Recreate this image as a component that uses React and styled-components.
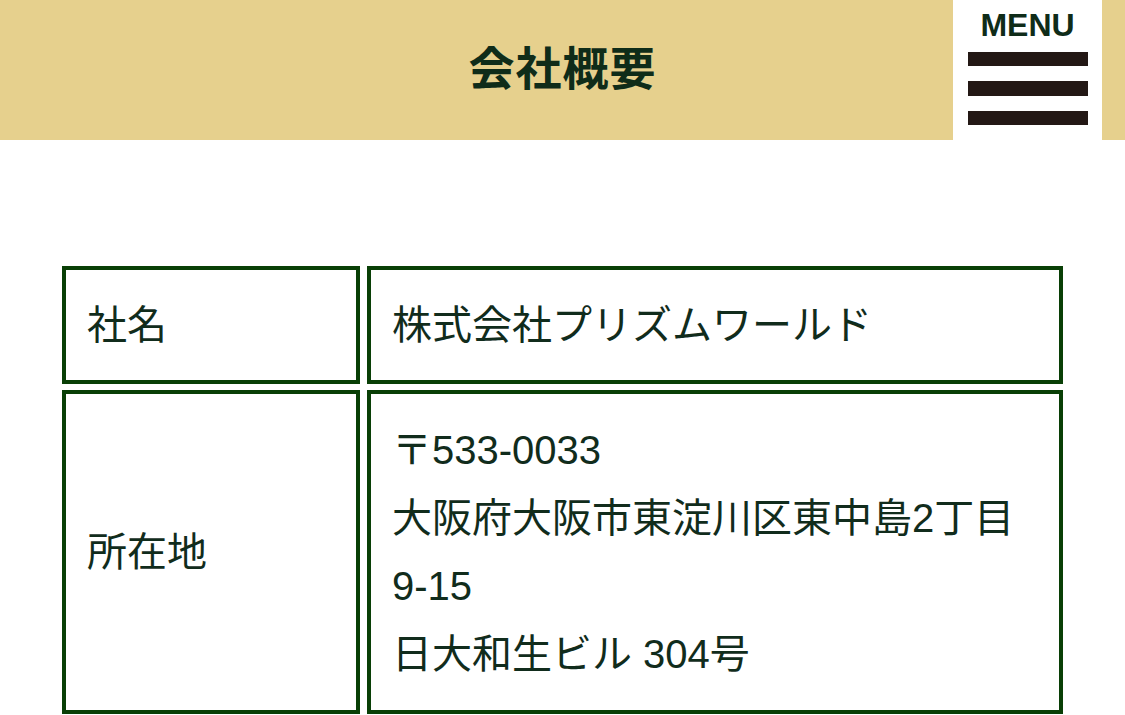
import React from "react";
import styled, { createGlobalStyle } from "styled-components";

const GlobalStyle = createGlobalStyle`
  body {
    margin: 0;
    background: #fff;
    font-family: "Liberation Sans", "Noto Sans CJK JP", sans-serif;
    color: #112c1c;
  }
`;

const rows = [
  { label: "社名", lines: ["株式会社プリズムワールド"] },
  {
    label: "所在地",
    lines: ["〒533-0033", "大阪府大阪市東淀川区東中島2丁目", "9-15", "日大和生ビル 304号"],
  },
];

const App = () => {
  return (
    <>
      <GlobalStyle />
      <Header>
        <Title>会社概要</Title>
        <MenuButton type="button">
          <span>MENU</span>
          <Bar />
          <Bar />
          <Bar />
        </MenuButton>
      </Header>
      <Main>
        <Table>
          {rows.map((row) => {
            const multi = row.lines.length > 1;
            return (
              <React.Fragment key={row.label}>
                <Cell $multi={multi}>{row.label}</Cell>
                <Cell $multi={multi}>
                  {row.lines.map((line) => (
                    <Line key={line}>{line}</Line>
                  ))}
                </Cell>
              </React.Fragment>
            );
          })}
        </Table>
      </Main>
    </>
  );
};

const Header = styled.header`
  position: relative;
  height: 140px;
  box-sizing: border-box;
  padding-bottom: 10px;
  background: #e6d08d;
  display: flex;
  align-items: center;
  justify-content: center;
`;

const Title = styled.h1`
  margin: 0;
  font-size: 46px;
  font-weight: bold;
  color: #0f2c19;
  letter-spacing: 1px;
`;

const MenuButton = styled.button`
  position: absolute;
  top: 0;
  right: 23px;
  width: 149px;
  height: 140px;
  border: none;
  background: #fff;
  padding: 10px 0 0;
  display: flex;
  flex-direction: column;
  align-items: center;
  cursor: pointer;
  font-family: inherit;

  span {
    font-size: 32px;
    font-weight: bold;
    color: #0f2c19;
    line-height: 30px;
    margin-bottom: 12px;
  }
`;

const Bar = styled.i`
  display: block;
  width: 120px;
  height: 15px;
  background: #231815;
  margin-bottom: 15px;
`;

const Main = styled.main`
  padding: 126px 62px 0;
`;

const Table = styled.div`
  display: grid;
  grid-template-columns: 298px 1fr;
  column-gap: 7px;
  row-gap: 6px;
`;

const Cell = styled.div`
  border: 4px solid #093f06;
  padding: ${(p) => (p.$multi ? "22px 21px" : "21px 21px")};
  display: flex;
  flex-direction: column;
  justify-content: center;
  font-size: 40px;
  line-height: 68px;
  color: #112c1c;
`;

const Line = styled.div`
  white-space: nowrap;
`;

export default App;
